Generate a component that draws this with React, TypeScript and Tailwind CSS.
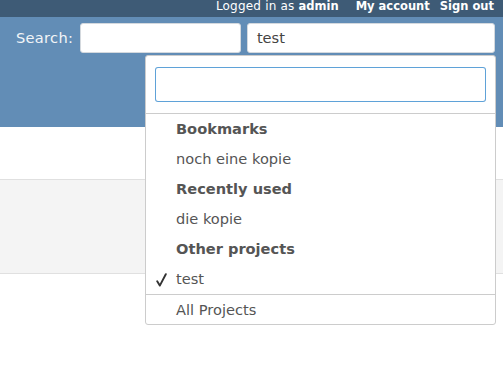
const font = { fontFamily: '"DejaVu Sans", Verdana, sans-serif' };

const rows = [
  { label: "Bookmarks", heading: true },
  { label: "noch eine kopie" },
  { label: "Recently used", heading: true },
  { label: "die kopie" },
  { label: "Other projects", heading: true },
  { label: "test", selected: true },
];

function Check() {
  return (
    <svg width="11" height="14" viewBox="0 0 11 14" className="absolute left-[10px] top-[9px]">
      <path d="M1.2 8.2 L3.8 12.6 L9.8 1.2" fill="none" stroke="#333" strokeWidth="1.9" strokeLinecap="round" strokeLinejoin="round" />
    </svg>
  );
}

export default function App() {
  return (
    <div className="relative w-[503px] h-[385px] overflow-hidden bg-white" style={font}>
      {/* Top menu */}
      <div className="h-[17px] bg-[#3e5b76] overflow-hidden flex justify-end pr-[9px]">
        <div className="-mt-[4px] text-[11.5px] leading-[20px] text-white flex items-baseline gap-[10px]">
          <span className="mr-[7px] text-[12px] tracking-[0.2px]">
            Logged in as <b className="text-[11.5px] tracking-normal">admin</b>
          </span>
          <b>My account</b>
          <b>Sign out</b>
        </div>
      </div>

      {/* Header */}
      <div className="h-[110px] bg-[#628db6] pt-[6px] pl-[16px] pr-[8px]">
        <div className="flex items-center">
          <span className="text-[14.6px] text-[#f2f5f8] mr-[7px] tracking-[0.3px]">Search:</span>
          <div className="w-[162px] h-[30px] bg-white rounded-[3px] border border-[#d4d9de]" />
          <div className="ml-[6px] w-[250px] h-[30px] bg-white rounded-[3px] border border-[#d4d9de] pl-[9px] flex items-center text-[14.6px] text-[#444]">
            test
          </div>
        </div>
      </div>

      {/* Content */}
      <div className="h-[52px]" />
      <div className="h-[95px] bg-[#f4f4f4] border-y border-[#e0e0e0]" />

      {/* Project jump dropdown */}
      <div className="absolute left-[145px] top-[55px] w-[351px] bg-white border border-[#cccccc] rounded-[3px] text-[14.6px] text-[#555]">
        <div className="px-[9px] pt-[11px] pb-[11px] border-b border-[#cccccc]">
          <div className="h-[35px] rounded-[3px] ring-1 ring-inset ring-[#5fa2d8] text-[#5fa2d8]" />
        </div>
        {rows.map((r) => (
          <div
            key={r.label}
            className={`h-[30px] flex items-center pl-[30px] relative ${r.heading ? "font-bold" : ""}`}
          >
            {r.selected && <Check />}
            {r.label}
          </div>
        ))}
        <div className="h-[30px] flex items-center pl-[30px] border-t border-[#cccccc]">
          All Projects
        </div>
      </div>
    </div>
  );
}
